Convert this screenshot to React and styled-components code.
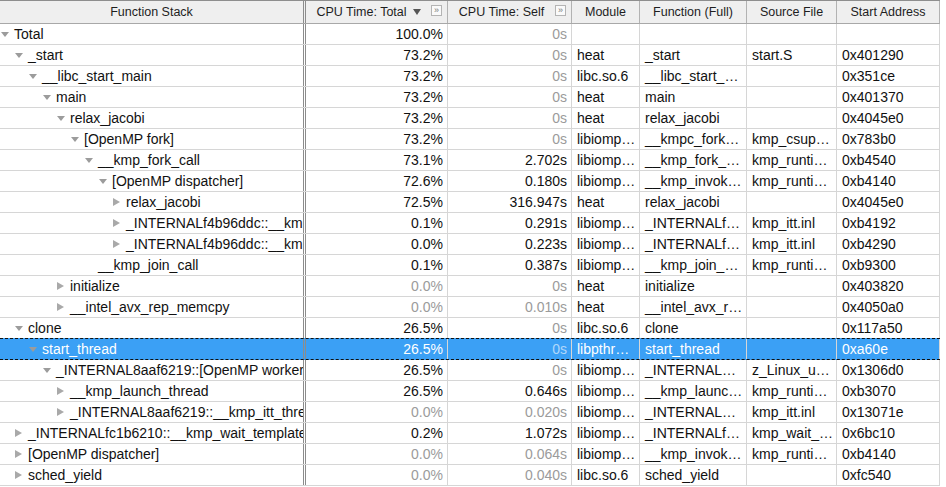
import React from "react"
import styled, { createGlobalStyle, css } from "styled-components"

const GlobalStyle = createGlobalStyle`
  html, body {
    margin: 0;
    padding: 0;
    background: #fff;
  }
  body {
    font-family: "Liberation Sans", Arial, sans-serif;
  }
`

const COLS = "306px 142px 124px 68px 107px 90px 103px"

const Table = styled.div`
  width: 940px;
`

const HeaderRow = styled.div`
  display: grid;
  grid-template-columns: ${COLS};
  height: 24px;
  box-sizing: border-box;
  border-top: 1px solid #8e8e8e;
  border-bottom: 1px solid #a8a8a8;
  background: #efefef;
`

const HeadCell = styled.div`
  display: flex;
  align-items: center;
  min-width: 0;
  box-sizing: border-box;
  font-size: 12.5px;
  color: #1e1e1e;
  border-right: ${p => (p.$split ? "3px double #8c8c8c" : "1px solid #b2b2b2")};
`

const HeadLabel = styled.span`
  flex: 1;
  display: flex;
  align-items: center;
  justify-content: center;
  white-space: nowrap;
`

const SortArrow = styled.span`
  width: 0;
  height: 0;
  margin-left: 6px;
  border-left: 4px solid transparent;
  border-right: 4px solid transparent;
  border-top: 6px solid #555;
`

const MoreButton = styled.span`
  align-self: flex-start;
  margin: 4px 5px 0 0;
  width: 9px;
  height: 9px;
  box-sizing: content-box;
  border: 1px solid #b4b4b4;
  background: #fafafa;
  color: #777;
  font-size: 9px;
  line-height: 8px;
  text-align: center;
`

const Row = styled.div`
  display: grid;
  grid-template-columns: ${COLS};
  height: 21px;
  box-sizing: border-box;
  border-bottom: 1px solid #d6d6d6;
  font-size: 14px;
  color: #111;
  ${p =>
    p.$selected &&
    css`
      height: 22px;
      margin-top: -1px;
      background: #3ba0f5;
      color: #fff;
      border-top: 1px dashed #111;
      border-bottom: 1px dashed #111;
    `}
`

const Cell = styled.div`
  min-width: 0;
  box-sizing: border-box;
  padding: ${p => (p.$num ? "0 4px 0 5px" : "0 1px 0 5px")};
  line-height: 20px;
  white-space: nowrap;
  overflow: hidden;
  text-overflow: ellipsis;
  border-right: 1px solid #d6d6d6;
  text-align: ${p => (p.$num ? "right" : "left")};
  color: ${p => (p.$dim ? (p.$sel ? "rgba(255,255,255,0.6)" : "#9b9b9b") : "inherit")};
`

const TreeCell = styled.div`
  display: flex;
  align-items: center;
  min-width: 0;
  overflow: hidden;
  white-space: nowrap;
  box-sizing: border-box;
  padding-left: ${p => p.$level * 14}px;
  border-right: 3px double #8c8c8c;
`

const Toggle = styled.span`
  flex: none;
  width: 14px;
  height: 20px;
  display: flex;
  align-items: center;
  padding-left: 1px;
  box-sizing: border-box;

  &::before {
    content: "";
    ${p =>
      p.$open
        ? css`
            border-left: 4px solid transparent;
            border-right: 4px solid transparent;
            border-top: 5px solid #9c9c9c;
          `
        : css`
            border-top: 4px solid transparent;
            border-bottom: 4px solid transparent;
            border-left: 7px solid #a9a9a9;
          `}
  }
`

const Name = styled.span`
  line-height: 20px;
`

// name, level, state ("open" | "closed" | leaf), total, self, module, func, source, address, greyed total
const rows = [
  ["Total", 0, "open", "100.0%", "0s", "", "", "", ""],
  ["_start", 1, "open", "73.2%", "0s", "heat", "_start", "start.S", "0x401290"],
  ["__libc_start_main", 2, "open", "73.2%", "0s", "libc.so.6", "__libc_start_…", "", "0x351ce"],
  ["main", 3, "open", "73.2%", "0s", "heat", "main", "", "0x401370"],
  ["relax_jacobi", 4, "open", "73.2%", "0s", "heat", "relax_jacobi", "", "0x4045e0"],
  ["[OpenMP fork]", 5, "open", "73.2%", "0s", "libiomp…", "__kmpc_fork…", "kmp_csup…", "0x783b0"],
  ["__kmp_fork_call", 6, "open", "73.1%", "2.702s", "libiomp…", "__kmp_fork_…", "kmp_runti…", "0xb4540"],
  ["[OpenMP dispatcher]", 7, "open", "72.6%", "0.180s", "libiomp…", "__kmp_invok…", "kmp_runti…", "0xb4140"],
  ["relax_jacobi", 8, "closed", "72.5%", "316.947s", "heat", "relax_jacobi", "", "0x4045e0"],
  ["_INTERNALf4b96ddc::__kmp_itt_fsync", 8, "closed", "0.1%", "0.291s", "libiomp…", "_INTERNALf…", "kmp_itt.inl", "0xb4192"],
  ["_INTERNALf4b96ddc::__kmp_itt_sync", 8, "closed", "0.0%", "0.223s", "libiomp…", "_INTERNALf…", "kmp_itt.inl", "0xb4290"],
  ["__kmp_join_call", 7, "leaf", "0.1%", "0.387s", "libiomp…", "__kmp_join_…", "kmp_runti…", "0xb9300"],
  ["initialize", 4, "closed", "0.0%", "0s", "heat", "initialize", "", "0x403820", true],
  ["__intel_avx_rep_memcpy", 4, "closed", "0.0%", "0.010s", "heat", "__intel_avx_r…", "", "0x4050a0", true],
  ["clone", 1, "open", "26.5%", "0s", "libc.so.6", "clone", "", "0x117a50"],
  ["start_thread", 2, "open", "26.5%", "0s", "libpthr…", "start_thread", "", "0xa60e"],
  ["_INTERNAL8aaf6219::[OpenMP worker thread]", 3, "open", "26.5%", "0s", "libiomp…", "_INTERNAL…", "z_Linux_u…", "0x1306d0"],
  ["__kmp_launch_thread", 4, "closed", "26.5%", "0.646s", "libiomp…", "__kmp_launc…", "kmp_runti…", "0xb3070"],
  ["_INTERNAL8aaf6219::__kmp_itt_thread_name", 4, "closed", "0.0%", "0.020s", "libiomp…", "_INTERNAL…", "kmp_itt.inl", "0x13071e", true],
  ["_INTERNALfc1b6210::__kmp_wait_template", 1, "closed", "0.2%", "1.072s", "libiomp…", "_INTERNALf…", "kmp_wait_…", "0x6bc10"],
  ["[OpenMP dispatcher]", 1, "closed", "0.0%", "0.064s", "libiomp…", "__kmp_invok…", "kmp_runti…", "0xb4140", true],
  ["sched_yield", 1, "closed", "0.0%", "0.040s", "libc.so.6", "sched_yield", "", "0xfc540", true],
]

const SELECTED = 15

function Header() {
  return (
    <HeaderRow>
      <HeadCell $split>
        <HeadLabel>Function Stack</HeadLabel>
      </HeadCell>
      <HeadCell>
        <HeadLabel>
          CPU Time: Total
          <SortArrow />
        </HeadLabel>
        <MoreButton>»</MoreButton>
      </HeadCell>
      <HeadCell>
        <HeadLabel>CPU Time: Self</HeadLabel>
        <MoreButton>»</MoreButton>
      </HeadCell>
      <HeadCell>
        <HeadLabel>Module</HeadLabel>
      </HeadCell>
      <HeadCell>
        <HeadLabel>Function (Full)</HeadLabel>
      </HeadCell>
      <HeadCell>
        <HeadLabel>Source File</HeadLabel>
      </HeadCell>
      <HeadCell>
        <HeadLabel>Start Address</HeadLabel>
      </HeadCell>
    </HeaderRow>
  )
}

export default function App() {
  return (
    <>
      <GlobalStyle />
      <Table>
        <Header />
        {rows.map((r, i) => {
          const [name, level, state, total, self, mod, func, src, addr, dimTotal] = r
          const sel = i === SELECTED
          return (
            <Row key={i} $selected={sel}>
              <TreeCell $level={level}>
                {state !== "leaf" && <Toggle $open={state === "open"} />}
                <Name>{name}</Name>
              </TreeCell>
              <Cell $num $dim={dimTotal} $sel={sel}>{total}</Cell>
              <Cell $num $dim={self === "0s" || dimTotal} $sel={sel}>{self}</Cell>
              <Cell>{mod}</Cell>
              <Cell>{func}</Cell>
              <Cell>{src}</Cell>
              <Cell>{addr}</Cell>
            </Row>
          )
        })}
      </Table>
    </>
  )
}
